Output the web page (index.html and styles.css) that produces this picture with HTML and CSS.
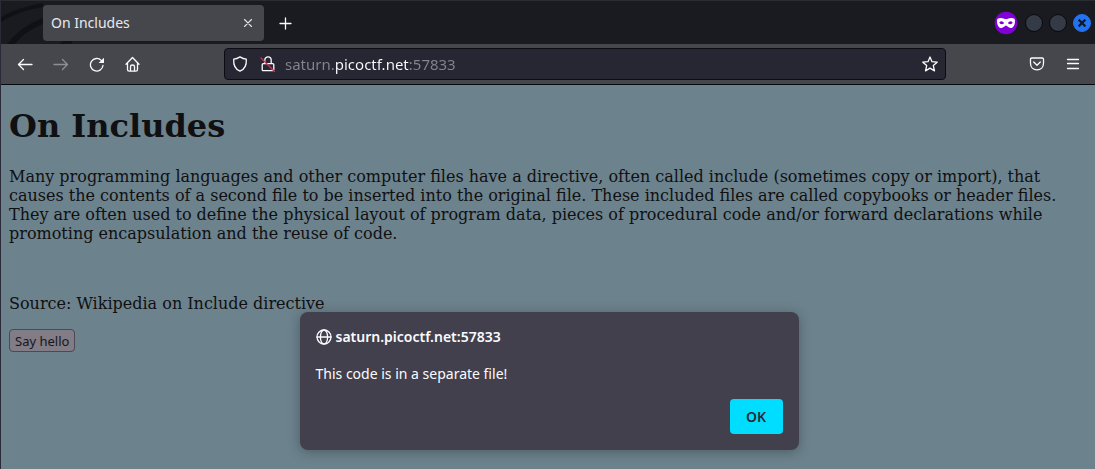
FILE: index.html
```html
<!DOCTYPE html>
<html lang="en">
<head>
<meta charset="utf-8">
<title>On Includes</title>
<link rel="stylesheet" href="styles.css">
</head>
<body>
<div class="browser">
  <header class="titlebar">
    <svg class="titlebar-art" width="120" height="43" viewBox="0 0 120 43" aria-hidden="true">
      <path d="M0 16Q18 6 42 2V6Q20 9 0 21ZM6 43Q20 25 42 17V23Q24 30 14 43ZM59 43L63 38H73L70 43Z" fill="#101115"/>
    </svg>
    <div class="tab">
      <span class="tab-title">On Includes</span>
      <button class="icon-button tab-close" aria-label="Close tab">
        <svg width="10" height="10" viewBox="0 0 10 10"><path d="M1.500 1.500L8.500 8.500M8.500 1.500L1.500 8.500" stroke="#e4e4e8" stroke-width="1.1"/></svg>
      </button>
    </div>
    <button class="icon-button new-tab" aria-label="New tab">
      <svg width="14" height="14" viewBox="0 0 14 14"><path d="M7.500 2V13M2 7.500H13" stroke="#fbfbfe" stroke-width="1.3"/></svg>
    </button>
    <div class="window-controls">
      <svg class="private" width="24" height="24" viewBox="0 0 24 24" role="img" aria-label="Private browsing">
        <circle cx="12" cy="12" r="11.3" fill="#8000d7"/>
        <path fill-rule="evenodd" fill="#fff" d="M3 9.4C3 7.6 4.6 6.9 6.8 6.9C9 6.9 10.2 8 12 8S15 6.9 17.200 6.900C19.400 6.900 21 7.600 21 9.400C21 13.500 19.600 17 16.600 17C14.200 17 13.400 14.500 12 14.500S9.800 17 7.400 17C4.400 17 3 13.500 3 9.400ZM5.200 11.700Q7.800 14.600 10.200 12Q7.600 8.800 5.200 11.700ZM13.800 12Q16.200 14.600 18.800 11.700Q16.400 8.800 13.800 12Z"/>
      </svg>
      <button class="icon-button window-button" aria-label="Minimize"></button>
      <button class="icon-button window-button" aria-label="Maximize"></button>
      <button class="icon-button window-button window-close" aria-label="Close window">
        <svg width="8" height="8" viewBox="0 0 8 8"><path d="M.6 .6L7.400 7.400M7.400 .6L.6 7.400" stroke="#101722" stroke-width="2.2"/></svg>
      </button>
    </div>
  </header>

  <nav class="toolbar" aria-label="Navigation">
    <div class="nav-buttons">
      <button class="icon-button" aria-label="Back">
        <svg width="16" height="16" viewBox="0 0 16 16"><path d="M15 8.500H1.500M6.500 3.500L1.500 8.500L6.500 13.500"/></svg>
      </button>
      <button class="icon-button" aria-label="Forward" disabled>
        <svg width="16" height="16" viewBox="0 0 16 16"><path d="M1 8.500H14.500M9.500 3.500L14.500 8.500L9.500 13.500"/></svg>
      </button>
      <button class="icon-button" aria-label="Reload">
        <svg width="16" height="16" viewBox="0 0 16 16"><path d="M14 9.500A6.300 6.300 0 1 1 12.300 4.400"/><path class="solid" d="M15 1.700V7.100H9.600Z"/></svg>
      </button>
      <button class="icon-button" aria-label="Home">
        <svg width="16" height="16" viewBox="0 0 16 16"><path d="M1 8.200L7.500 1.500L14 8.200M2.500 6.800V13.500Q2.500 15.200 4.200 15.200H10.800Q12.500 15.200 12.500 13.500V6.800M5.500 15.200V10.800Q5.500 9 7.500 9T9.500 10.800V15.200"/></svg>
      </button>
    </div>
    <div class="urlbar">
      <svg width="16" height="16" viewBox="0 0 16 16" aria-hidden="true"><path d="M8 .9Q4.800 2.900 1.700 3.200C1.300 9.200 3.800 13.500 8 15.100C12.200 13.500 14.700 9.200 14.300 3.200Q11.200 2.900 8 .9Z"/></svg>
      <svg class="lock" width="16" height="16" viewBox="0 0 16 16" aria-hidden="true"><path d="M4.800 7V4A3.200 3.200 0 0 1 11.200 4V7M3.300 7.700H12.700Q13.800 7.700 13.800 8.800V13.500Q13.800 14.700 12.700 14.700H3.300Q2.200 14.700 2.200 13.500V8.800Q2.200 7.700 3.300 7.700Z"/><path class="slash" d="M1 2L14.500 15.500"/></svg>
      <input class="url" type="text" aria-label="Address" value="saturn.picoctf.net:57833">
      <button class="icon-button star" aria-label="Bookmark this page">
        <svg width="16" height="16" viewBox="0 0 16 16"><path d="M8 1L10 5.700L15.200 6.200L11.300 9.600L12.500 14.900L8 12.100L3.500 14.900L4.700 9.600L.8 6.200L6 5.700Z"/></svg>
      </button>
    </div>
    <div class="tool-buttons">
      <button class="icon-button" aria-label="Save to Pocket">
        <svg width="16" height="16" viewBox="0 0 16 16"><path d="M2.800 2H13.200Q14.500 2 14.500 3.300V7.300C14.500 11.300 11.800 13.800 8 13.800S1.500 11.300 1.500 7.300V3.300Q1.500 2 2.800 2ZM4.700 6L8 9.200L11.300 6"/></svg>
      </button>
      <button class="icon-button" aria-label="Open application menu">
        <svg width="14" height="14" viewBox="0 0 14 14"><path d="M1.500 2.500H12.500M1.500 6.500H12.500M1.500 11.500H12.500"/></svg>
      </button>
    </div>
  </nav>

  <main class="page">
    <h1>On Includes</h1>
    <p>Many programming languages and other computer files have a directive, often called include (sometimes copy or import), that causes the contents of a second file to be inserted into the original file. These included files are called copybooks or header files. They are often used to define the physical layout of program data, pieces of procedural code and/or forward declarations while promoting encapsulation and the reuse of code.</p>
    <p class="source">Source: Wikipedia on Include directive</p>
    <button class="hello">Say hello</button>

    <section class="dialog" role="alertdialog" aria-labelledby="dialog-title" aria-describedby="dialog-text">
      <div class="dialog-title" id="dialog-title">
        <svg width="16" height="16" viewBox="0 0 16 16" aria-hidden="true"><circle cx="8" cy="8" r="7"/><path d="M1 8H15"/><ellipse cx="8" cy="8" rx="3.600" ry="7"/></svg>
        <span>saturn.picoctf.net:57833</span>
      </div>
      <p class="dialog-text" id="dialog-text">This code is in a separate file!</p>
      <div class="dialog-actions"><button class="ok">OK</button></div>
    </section>
  </main>
</div>
</body>
</html>
```
FILE: styles.css
```css
* { box-sizing: border-box; }
body {
  margin: 0;
  font-family: "Noto Sans", sans-serif;
  font-size: 14px;
}
button { font: inherit; }
svg {
  flex: none;
  display: block;
  fill: none;
  stroke: #fbfbfe;
  stroke-width: 1.3;
  stroke-linejoin: round;
  stroke-linecap: round;
}
.browser {
  display: flex;
  flex-direction: column;
  min-height: 100vh;
  border-left: 1px solid #2b2a38;
}
.icon-button {
  display: flex;
  align-items: center;
  justify-content: center;
  flex: none;
  padding: 0;
  border: 0;
  background: none;
}
.icon-button:disabled { opacity: 0.4; }

.titlebar {
  position: relative;
  display: flex;
  align-items: center;
  height: 44px;
  padding-left: 42px;
  background: #1a1b20;
  border-top: 1px solid #2b2c31;
}
.titlebar-art {
  position: absolute;
  left: 0;
  top: 0;
  stroke: none;
}
.tab {
  position: relative;
  display: flex;
  align-items: center;
  justify-content: space-between;
  width: 221px;
  height: 36px;
  padding: 0 8px;
  border-radius: 4px;
  background: #45474d;
  color: #e9e9ed;
}
.tab-close { width: 16px; height: 16px; }
.new-tab { width: 42px; height: 36px; }
.window-controls {
  display: flex;
  align-items: center;
  gap: 6px;
  margin-left: auto;
  padding-right: 4px;
}
.private { margin-right: 1px; stroke: none; }
.window-button {
  width: 18px;
  height: 18px;
  border: 1px solid #08090c;
  border-radius: 50%;
  background: #343a46;
}
.window-close { border-color: #2372f0; background: #2372f0; }
.window-close svg { stroke-linecap: butt; }

.toolbar {
  display: grid;
  grid-template-columns: 222px minmax(0, 722px) minmax(82px, 1fr);
  align-items: center;
  height: 41px;
  padding-left: 1px;
  background: #45474d;
  border-bottom: 1px solid #08090c;
}
.nav-buttons { display: flex; gap: 20px; padding-left: 15px; }
.tool-buttons {
  display: flex;
  justify-content: flex-end;
  gap: 21px;
  padding-right: 15px;
}
.solid { fill: #fbfbfe; stroke: none; }
.urlbar {
  display: flex;
  align-items: center;
  height: 32px;
  padding: 0 7px;
  gap: 8px;
  border: 1px solid #0c0c12;
  border-radius: 4px;
  background: #272733;
}
.lock { margin-left: 4px; }
.slash { stroke: #e22850; }
.url {
  flex: 1;
  min-width: 0;
  height: 24px;
  padding: 0;
  margin-left: 1px;
  border: 0;
  outline: 0;
  font: 15px/24px "Noto Sans", sans-serif;
  color: transparent;
  background: linear-gradient(90deg, #84848e 50px, #fbfbfe 50px 125px, #84848e 125px);
  background-clip: text;
  -webkit-background-clip: text;
}

.page {
  position: relative;
  flex: 1;
  padding: 21px 8px 8px;
  background: #6c828c;
  color: #101012;
  font: 16px/19px "DejaVu Serif", serif;
}
h1 { margin: 0 0 21px; font-size: 32px; line-height: 40px; }
.page p { margin: 0; }
.page .source { margin: 51px 0 16px; }
.hello {
  display: block;
  height: 23px;
  padding: 0 5px;
  border: 1px solid #4a4954;
  border-radius: 4px;
  background: #817c85;
  color: #17171a;
  font: 13px/20px "Noto Sans", sans-serif;
}

.dialog {
  position: absolute;
  top: 227px;
  left: 2px;
  right: 0;
  width: 499px;
  max-width: 100%;
  margin: 0 auto;
  padding: 16px;
  border-radius: 8px;
  background: #42404d;
  box-shadow: 0 2px 12px rgba(20, 25, 35, 0.35);
  color: #fbfbfe;
  font: 14px/18px "Noto Sans", sans-serif;
}
.dialog-title {
  display: flex;
  align-items: center;
  gap: 4px;
  font-weight: 600;
}
.page .dialog-text { margin: 19px 0 16px; }
.dialog-actions { display: flex; justify-content: flex-end; }
.ok {
  width: 53px;
  height: 35px;
  padding: 0;
  border: 0;
  border-radius: 4px;
  background: #00ddff;
  color: #2b2a33;
  font-weight: 600;
}
```
